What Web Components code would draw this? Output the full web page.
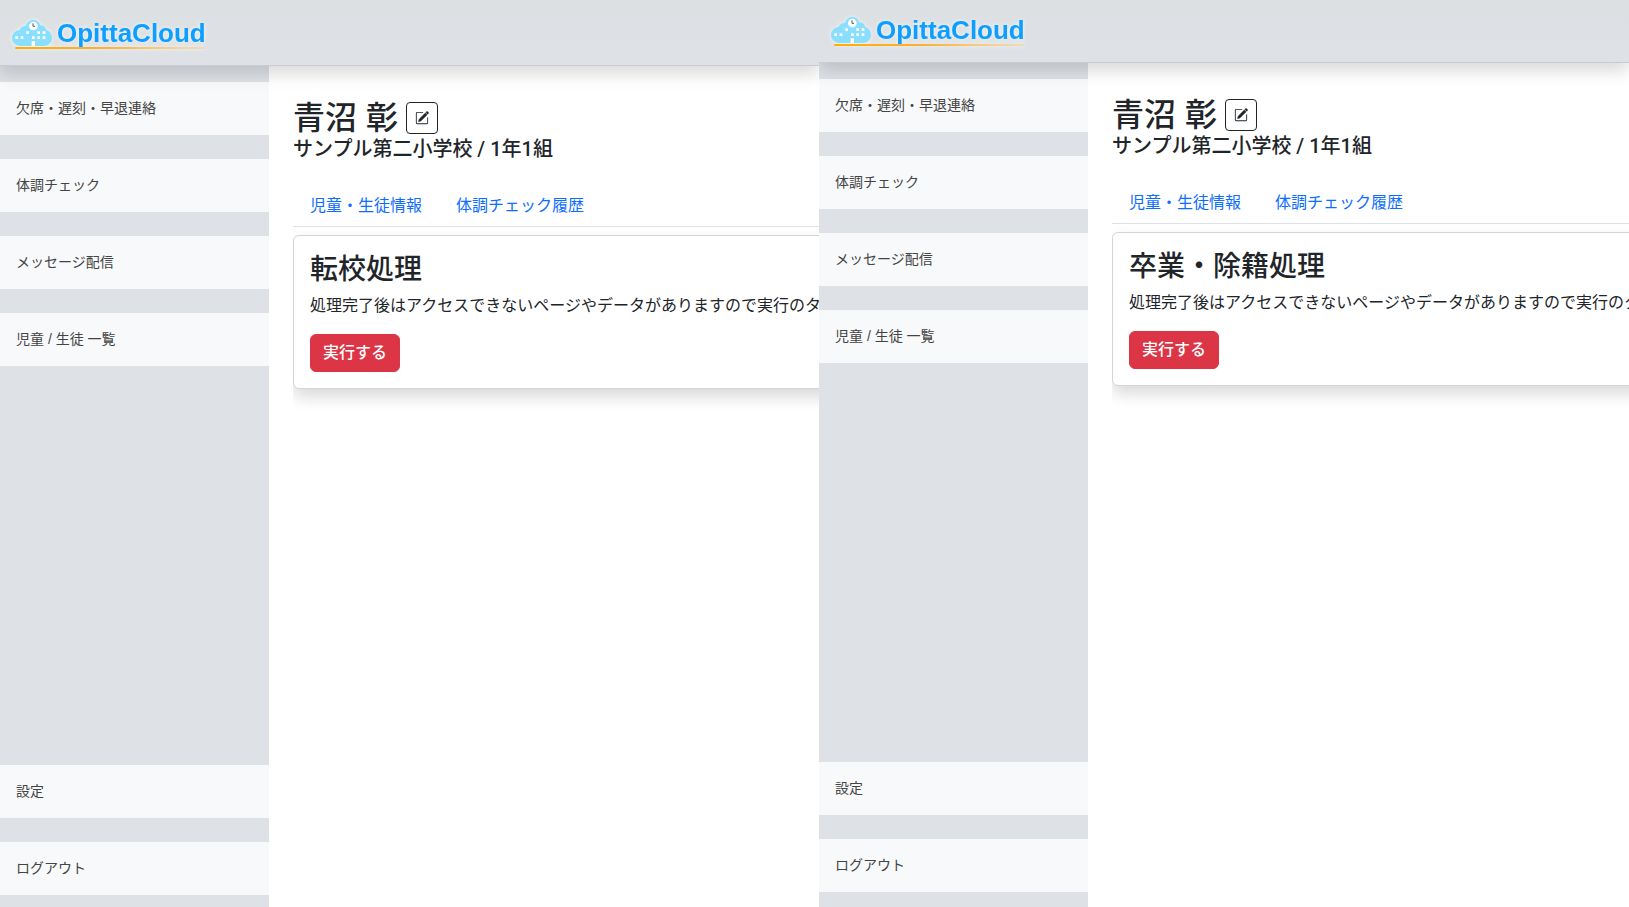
<!DOCTYPE html>
<html lang="ja">
<head>
<meta charset="utf-8">
<title>OpittaCloud</title>
<style>
  body { margin: 0; background: #fff; color: #212529; font: 16px/24px "Liberation Sans", "Noto Sans CJK JP", sans-serif; }
  .compare { display: grid; grid-template-columns: 819fr 810fr; min-height: 100vh; overflow: hidden; }
</style>
</head>
<body>
<div class="compare">
  <app-screen>
    <student-header slot="main" name="青沼 彰" school="サンプル第二小学校 / 1年1組"></student-header>
    <tab-links slot="main"></tab-links>
    <action-card slot="main" heading="転校処理" action="実行する">処理完了後はアクセスできないページやデータがありますので実行のタ</action-card>
  </app-screen>
  <app-screen style="--lift: 3px">
    <student-header slot="main" name="青沼 彰" school="サンプル第二小学校 / 1年1組"></student-header>
    <tab-links slot="main"></tab-links>
    <action-card slot="main" heading="卒業・除籍処理" action="実行する">処理完了後はアクセスできないページやデータがありますので実行のタ</action-card>
  </app-screen>
</div>
<script>
const define = (name, html, setup) => {
  const template = document.createElement('template');
  template.innerHTML = html;
  customElements.define(name, class extends HTMLElement {
    constructor() {
      super();
      this.attachShadow({ mode: 'open' }).append(template.content.cloneNode(true));
    }
    connectedCallback() { if (setup) setup(this, this.shadowRoot); }
  });
};

define('brand-logo', `
<style>
  :host { display: block; }
  a { display: inline-grid; grid-template-columns: 40px auto; column-gap: 5px; align-items: center; color: #0d9fff; text-decoration: none; filter: drop-shadow(0 0 2px rgba(255,255,255,.7)); }
  svg { display: block; width: 40px; height: 26px; }
  span { font-size: 26px; font-weight: 700; line-height: 28px; }
  i { grid-column: 1 / -1; height: 2px; margin-left: 3px; background: linear-gradient(90deg, #ffae00, #fbb030 45%, #f6cf8a 80%, #ecdcc0); border-radius: 1px; }
</style>
<a href="#">
  <svg viewBox="0 0 120 78" aria-hidden="true">
    <path fill="#8adfff" d="M26 78C11 78 0 67 0 54c0-13 10-23 23-24 2-8 10-13 19-13C45 6 54 0 64 0s18 6 21 16c10 0 16 6 18 14 10 2 17 12 17 24 0 14-11 24-25 24z"/>
    <circle cx="64" cy="18" r="13" fill="#fff"/>
    <path d="M63 10v9h6" fill="none" stroke="#555" stroke-width="3"/>
    <path fill="#fff" d="M10 49h8v8h-8zM26 49h8v8h-8zM43 34h8v8h-8zM60 49h8v8h-8zM76 34h8v8h-8zM92 34h8v8h-8zM76 49h8v8h-8zM92 49h8v8h-8zM59 64h10v14H59z"/>
  </svg>
  <span>OpittaCloud</span>
  <i></i>
</a>`);

define('nav-item', `
<style>
  :host { display: block; }
  a { display: block; padding: 16px; background: #f8f9fa; color: #444; font-size: 14px; line-height: 21px; text-decoration: none; }
</style>
<a href="#"><slot></slot></a>`);

define('student-header', `
<style>
  :host { display: block; }
  .name { display: flex; align-items: center; gap: 8px; }
  h1, p { margin: 0; font-weight: 500; white-space: nowrap; }
  h1 { font-size: 32px; line-height: 38px; }
  p { font-family: Roboto, "Noto Sans CJK JP", sans-serif; font-size: 20px; line-height: 25px; }
  button { display: grid; place-items: center; width: 32px; height: 32px; padding: 0; border: 1px solid #212529; border-radius: 4px; background: #fff; color: #212529; }
  svg { width: 14px; height: 14px; }
</style>
<div class="name">
  <h1></h1>
  <button type="button" aria-label="編集">
    <svg viewBox="0 0 16 16" fill="currentColor" aria-hidden="true"><path stroke="currentColor" stroke-width=".6" d="M15.502 1.94a.5.5 0 0 1 0 .706L14.459 3.69l-2-2L13.502.646a.5.5 0 0 1 .707 0l1.293 1.293zm-1.75 2.456-2-2L4.939 9.21a.5.5 0 0 0-.121.196l-.805 2.414a.25.25 0 0 0 .316.316l2.414-.805a.5.5 0 0 0 .196-.12l6.813-6.814z"/><path fill-rule="evenodd" d="M1 13.5A1.5 1.5 0 0 0 2.500 15h11a1.500 1.500 0 0 0 1.500-1.500v-6a.5.5 0 0 0-1 0v6a.5.5 0 0 1-.5.5h-11a.5.5 0 0 1-.5-.5v-11a.5.5 0 0 1 .5-.5H9a.5.5 0 0 0 0-1H2.500A1.500 1.500 0 0 0 1 2.500z"/></svg>
  </button>
</div>
<p></p>`, (host, root) => {
  root.querySelector('h1').textContent = host.getAttribute('name');
  root.querySelector('p').textContent = host.getAttribute('school');
});

define('tab-links', `
<style>
  :host { display: block; margin-top: 24px; }
  nav { display: flex; border-bottom: 1px solid #dee2e6; width: calc(100% + 24px); }
  a { padding: 8px 17px; color: #0d6efd; text-decoration: none; white-space: nowrap; }
</style>
<nav><a href="#">児童・生徒情報</a><a href="#">体調チェック履歴</a></nav>`);

define('action-card', `
<style>
  :host { display: block; padding: 8px 0 26px; overflow: hidden; margin-right: -24px; }
  section { width: calc(100% + 24px); box-sizing: border-box; padding: 16px; border: 1px solid #d3d4d5; border-radius: 6px; background: #fff; box-shadow: 0 8px 16px rgba(0,0,0,.15); }
  h2 { margin: 0 0 6px; font-size: 28px; line-height: 36px; font-weight: 500; }
  p { margin: 0 0 16px; white-space: nowrap; }
  button { display: block; padding: 6px 12px; border: 1px solid #dc3545; border-radius: 6px; background: #dc3545; color: #fff; font: inherit; font-weight: 500; }
</style>
<section>
  <h2></h2>
  <p><slot></slot></p>
  <button type="button"></button>
</section>`, (host, root) => {
  root.querySelector('h2').textContent = host.getAttribute('heading');
  root.querySelector('button').textContent = host.getAttribute('action');
});

define('app-screen', `
<style>
  :host { display: grid; grid-template-rows: auto 1fr; min-width: 0; overflow: hidden; background: #fff; }
  header { position: relative; z-index: 1; padding: calc(19px - var(--lift, 0px)) 12px 12px; background: linear-gradient(#dce0e3, #dee2e6); border-bottom: 1px solid #c8cbcf; box-shadow: 0 8px 16px rgba(0,0,0,.15); }
  .body { display: grid; grid-template-columns: 269px minmax(0, 1fr); }
  aside { display: flex; flex-direction: column; justify-content: space-between; padding: 16px 0 calc(12px + var(--lift, 0px)); background: #dee2e6; }
  nav { display: grid; gap: 24px; }
  main { padding: 33px 24px; overflow: hidden; }
</style>
<header><brand-logo></brand-logo></header>
<div class="body">
  <aside>
    <nav>
      <nav-item>欠席・遅刻・早退連絡</nav-item>
      <nav-item>体調チェック</nav-item>
      <nav-item>メッセージ配信</nav-item>
      <nav-item>児童 / 生徒 一覧</nav-item>
    </nav>
    <nav>
      <nav-item>設定</nav-item>
      <nav-item>ログアウト</nav-item>
    </nav>
  </aside>
  <main><slot name="main"></slot></main>
</div>`);
</script>
</body>
</html>
